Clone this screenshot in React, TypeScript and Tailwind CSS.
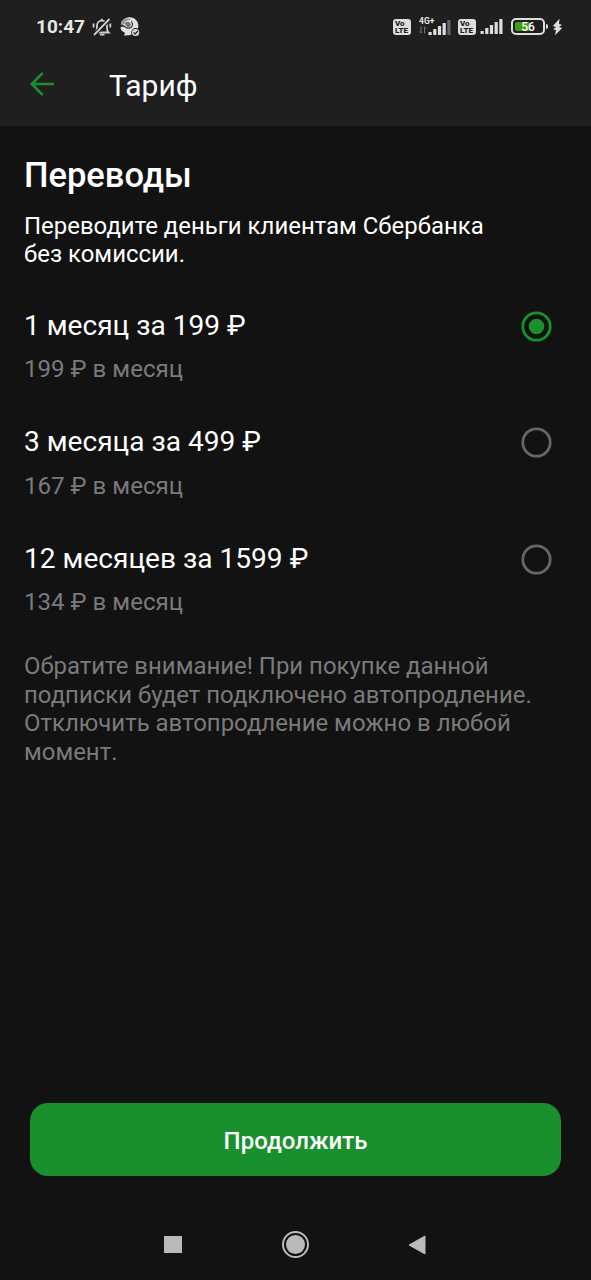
import { useState } from "react";
import clsx from "clsx";

const planes = [
  { id: 1, title: "1 месяц за 199 ₽", perMonth: "199 ₽ в месяц" },
  { id: 3, title: "3 месяца за 499 ₽", perMonth: "167 ₽ в месяц" },
  { id: 12, title: "12 месяцев за 1599 ₽", perMonth: "134 ₽ в месяц" },
];

const VoLte = () => (
  <div className="flex h-4 w-[18px] flex-col items-start justify-center rounded-[3px] bg-[#dedede] pl-[2px] text-[8px] leading-[7px] font-black text-[#1f1f1f]">
    <span>Vo</span>
    <span>LTE</span>
  </div>
);

const Signal = ({ bars }: { bars: number }) => (
  <svg width="23" height="16" viewBox="0 0 23 16">
    {[3, 6, 9, 12, 15].map((h, i) => (
      <rect key={h} x={0.5 + i * 4.7} y={16 - h} width="3.2" height={h} rx="0.6" fill={i < bars ? "#dedede" : "#666666"} />
    ))}
  </svg>
);

const StatusBar = () => (
  <div className="flex h-[53px] items-center pl-[36px] text-[#e6e6e6]">
    <span className="w-[50px] text-[19px] leading-5 font-bold">10:47</span>

    {/* Sin sonido */}
    <svg className="ml-[6px]" width="20" height="20" viewBox="0 0 20 20" fill="none" stroke="#cfcfcf" strokeWidth="1.8">
      <path d="M3.5 15.5 H16.5 C14.8 14 15 12 15 8.8 C15 5.8 13 3.7 10 3.7 C7 3.7 5 5.8 5 8.8 C5 12 5.2 14 3.5 15.5" />
      <path d="M8 17.6 H12.5 M9.8 3.5 V1.8 M1.6 6.5 V10.5 M18.3 6.5 V10.5" />
      <path d="M17.5 2 L2 18" stroke="#1f1f1f" strokeWidth="4" />
      <path d="M17.5 2 L2 18" />
    </svg>

    {/* Mensajero */}
    <svg className="ml-[8px]" width="20" height="20" viewBox="0 0 20 20">
      <path d="M1 6 C3 0 12 -2 16 3 C19 6 19 11 16.5 14 C13 18 9 18.5 3.5 18.5 C5 17.5 5.2 16.5 4.5 15.5 C2 14.5 0.5 12.5 0.5 10.5 C2 9 4 9.5 5.5 10.5Z" fill="#e2e2e2" />
      <path d="M0.6 8.5 C1 2 8 -0.5 12 3.2 C8 2.4 5 4 4.2 7 C3 7 1.6 7.4 0.6 8.5Z" fill="#999999" />
      <path d="M4.5 7 C5.5 4.5 9 4 10.5 6.5 C11.5 9 9.5 10.8 7.5 10 C6.5 9.4 6 7.6 4.5 7Z" fill="#777777" />
      <path d="M0.6 9.2 C4 6.8 5 11.6 9.2 11.2 C12.8 10.6 13.4 7 11.4 4.4" fill="none" stroke="#353535" strokeWidth="1.2" />
      <circle cx="15.6" cy="15.5" r="4.4" fill="#1f1f1f" />
      <circle cx="15.6" cy="15.5" r="3.6" fill="#d8d8d8" />
      <path d="M13.6 15.5 L15.2 17 L17.8 14" fill="none" stroke="#1f1f1f" strokeWidth="1.2" />
    </svg>

    <div className="ml-auto flex items-center pr-[28px]">
      <VoLte />
      <div className="relative ml-[8px] flex h-[18px] w-[32px] items-end justify-end pb-[1px]">
        <span className="absolute -top-[1px] left-0 text-[8.5px] leading-[8px] font-bold">4G+</span>
        <svg className="mb-[1px] mr-auto" width="8" height="8" viewBox="0 0 8 8" fill="none" stroke="#777777">
          <path d="M2 0.5 V7 M0.5 5.5 L2 7 M5.5 7.5 V1 M5.5 1 L7 2.5" />
        </svg>
        <Signal bars={4} />
      </div>
      <div className="ml-[7px]"><VoLte /></div>
      <div className="ml-[4px] pb-[2px]"><Signal bars={5} /></div>

      {/* Batería */}
      <div className="relative ml-[8px] flex h-[17px] w-[34px] items-center justify-center rounded-[5px] border-2 border-[#dedede]">
        <div className="absolute top-[2px] bottom-[2px] left-[2px] w-[15px] rounded-[2px] bg-[#3f9e15]" />
        <span className="relative text-[12px] leading-3 font-medium text-white">56</span>
      </div>
      <div className="ml-[1px] h-[5px] w-[2px] rounded-r bg-[#dedede]" />
      <svg className="ml-[4px]" width="11" height="18" viewBox="0 0 11 18">
        <path d="M7.5 0.8 L0.8 8 L4 9 L1 11.2 L4 12 L3 17.2 L10.2 10 L7 9 L10 6.8 L7 6Z" fill="#dedede" />
      </svg>
    </div>
  </div>
);

const Radio = ({ checked }: { checked: boolean }) => (
  <svg width="31" height="31" viewBox="0 0 31 31" fill="none">
    <circle cx="15.5" cy="15.5" r="13.7" stroke={checked ? "#18902e" : "#666666"} strokeWidth="2.8" />
    {checked && <circle cx="15.5" cy="15.5" r="7.8" fill="#18902e" />}
  </svg>
);

export default function App() {
  const [selected, setSelected] = useState(1);

  return (
    <div className="flex h-[1280px] w-[591px] flex-col bg-[#121212] font-['Roboto','Noto_Sans',sans-serif] text-white">
      <header className="h-[126px] bg-[#1f1f1f]">
        <StatusBar />
        <div className="flex h-[62px] items-center pl-[29px]">
          <button aria-label="Назад">
            <svg width="26" height="26" viewBox="0 0 26 26" fill="none" stroke="#18902e" strokeWidth="2.6">
              <path d="M13.8 1.8 L2.8 13 L13.8 24.2 M2.8 13 H25" />
            </svg>
          </button>
          <h1 className="ml-[54px] pt-[4px] text-[30px] leading-9">Тариф</h1>
        </div>
      </header>

      <main className="flex-1 px-6 pt-[29px]">
        <h2 className="text-[34.5px] leading-10 font-medium">Переводы</h2>
        <p className="mt-[16.7px] text-[23.95px] leading-[28.5px]">
          Переводите деньги клиентам Сбербанка
          <br />
          без комиссии.
        </p>

        <div className="mt-[39.9px]">
          {planes.map((p) => (
            <button
              key={p.id}
              onClick={() => setSelected(p.id)}
              className="flex h-[116.5px] w-full items-start justify-between pr-[15px] text-left"
            >
              <span className="block">
                <span className="block text-[28.1px] leading-[34px]">{p.title}</span>
                <span className="mt-[12.7px] block text-[24.1px] leading-[28px] text-[#7a7a7a]">{p.perMonth}</span>
              </span>
              <span className="pt-[2.4px]">
                <Radio checked={selected === p.id} />
              </span>
            </button>
          ))}
        </div>

        <p className="-mt-[6px] text-[23.95px] leading-[28.5px] text-[#7a7a7a]">
          Обратите внимание! При покупке данной
          <br />
          подписки будет подключено автопродление.
          <br />
          Отключить автопродление можно в любой
          <br />
          момент.
        </p>
      </main>

      <footer className="px-[30px]">
        <button className="h-[73px] w-full rounded-[18px] bg-[#18902e] pt-[2px] text-[24px] leading-7 font-medium">
          Продолжить
        </button>
      </footer>

      {/* Navegación del sistema */}
      <nav className="flex h-[104px] items-center justify-between pt-[33px] pr-[165px] pl-[164px]">
        <span className="h-[17px] w-[18px] bg-[#bababa]" />
        <span className="flex size-[27px] items-center justify-center rounded-full border-2 border-[#bababa]">
          <span className="size-[19px] rounded-full bg-[#bababa]" />
        </span>
        <svg width="18" height="20" viewBox="0 0 18 20">
          <path d="M17 1 V19 L1 10Z" fill="#bababa" stroke="#bababa" strokeLinejoin="round" />
        </svg>
      </nav>
    </div>
  );
}
